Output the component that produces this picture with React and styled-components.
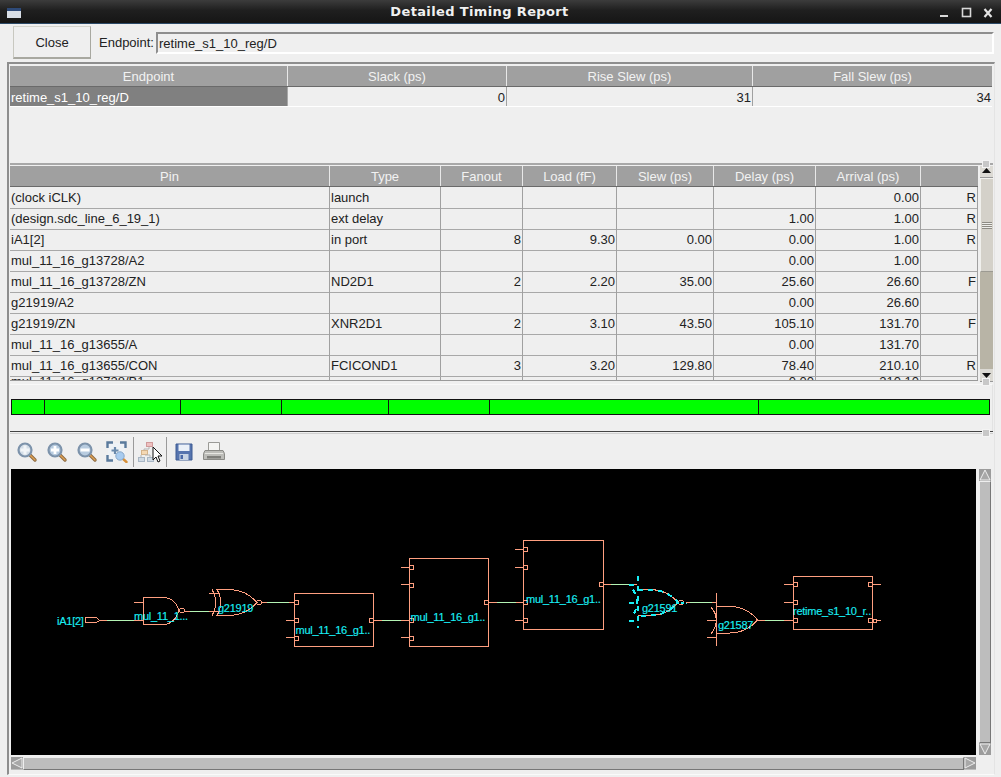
import React from 'react'
import styled, { createGlobalStyle } from 'styled-components'

const GlobalStyle = createGlobalStyle`
    html, body { margin: 0; padding: 0; background: #efefef; }
    body { width: 1001px; height: 777px; overflow: hidden; font-family: "Liberation Sans", Arial, sans-serif; font-size: 13px; color: #222; }
`

const endpointCols = [278, 219, 246, 239]
const pathCols = [320, 111, 82, 94, 97, 102, 105, 57]

const pathRows = [
    ['(clock iCLK)', 'launch', '', '', '', '', '0.00', 'R'],
    ['(design.sdc_line_6_19_1)', 'ext delay', '', '', '', '1.00', '1.00', 'R'],
    ['iA1[2]', 'in port', '8', '9.30', '0.00', '0.00', '1.00', 'R'],
    ['mul_11_16_g13728/A2', '', '', '', '', '0.00', '1.00', ''],
    ['mul_11_16_g13728/ZN', 'ND2D1', '2', '2.20', '35.00', '25.60', '26.60', 'F'],
    ['g21919/A2', '', '', '', '', '0.00', '26.60', ''],
    ['g21919/ZN', 'XNR2D1', '2', '3.10', '43.50', '105.10', '131.70', 'F'],
    ['mul_11_16_g13655/A', '', '', '', '', '0.00', '131.70', ''],
    ['mul_11_16_g13655/CON', 'FCICOND1', '3', '3.20', '129.80', '78.40', '210.10', 'R'],
]
const clippedRow = ['mul_11_16_g13728/B1', '', '', '', '', '0.00', '210.10', '']

const headers = ['Pin', 'Type', 'Fanout', 'Load (fF)', 'Slew (ps)', 'Delay (ps)', 'Arrival (ps)', '']
const segments = [33, 136, 101, 107, 101, 269, 232]

// icons for the toolbar
function Magnifier({ mark }) {
    return (
        <svg width="22" height="22" viewBox="0 0 22 22">
            <path d="M13 13l6 6" stroke="#8a6a44" strokeWidth="3.400" strokeLinecap="round" />
            <path d="M14 14l5 5" stroke="#e0a050" strokeWidth="1.400" strokeLinecap="round" />
            <circle cx="9" cy="9" r="6.500" fill={mark === 'fit' ? '#d4dee8' : '#b8cce0'} stroke="#7d93ab" strokeWidth="2.200" />
            {mark === 'fit' && <path d="M4.500 9h9M9 4.500v9" stroke="#f2f5f8" strokeWidth="3" />}
            {mark === 'plus' && <path d="M5 9h8M9 5v8" stroke="#ffffff" strokeWidth="2.800" />}
            {mark === 'minus' && <path d="M4.500 9h9" stroke="#ffffff" strokeWidth="3" />}
        </svg>
    )
}

function ZoomSelect() {
    return (
        <svg width="22" height="22" viewBox="0 0 22 22">
            <rect x="2" y="2" width="17" height="17" fill="#eef2f6" />
            <path d="M1.500 7V1.500H7M14 1.500h5.500V7M1.500 14v5.500H7" fill="none" stroke="#5a7a9c" strokeWidth="2.400" />
            <path d="M5.500 9.500h7M9 6v7" stroke="#6a8aac" strokeWidth="2.200" />
            <path d="M16 17l4.500 4" stroke="#d89038" strokeWidth="2.400" strokeLinecap="round" />
            <circle cx="14" cy="15" r="4.200" fill="#a8ccf0" stroke="#8aa8c8" />
        </svg>
    )
}

function HierarchyPointer() {
    return (
        <svg width="26" height="24" viewBox="0 0 26 24">
            <rect x="9.500" y="2.500" width="6" height="4" fill="#eec0c0" stroke="#d09a9a" />
            <rect x="4.500" y="10.500" width="6" height="4" fill="#f4d8b4" stroke="#d4b48c" />
            <rect x="1.500" y="17.500" width="6" height="4" fill="#d0dae4" stroke="#a8b6c4" />
            <rect x="10.500" y="17.500" width="6" height="4" fill="#d0dae4" stroke="#a8b6c4" />
            <path d="M12 7v2H7v1M4 15v2M8 15h5v2" fill="none" stroke="#b4b4b4" />
            <path d="M16 7v13l3-3 2 5 2-1-2-5h4z" fill="#fff" stroke="#111" strokeWidth="1" />
        </svg>
    )
}

function Floppy() {
    return (
        <svg width="18" height="18" viewBox="0 0 18 18">
            <path d="M1 1h16v16H1z" fill="#5674ae" stroke="#3c5a92" />
            <rect x="3.500" y="1.500" width="11" height="6.500" fill="#eaf0f8" />
            <rect x="4.500" y="11" width="9" height="6" fill="#c8d4e4" />
            <rect x="5.500" y="12" width="2.500" height="4" fill="#4a69a8" />
        </svg>
    )
}

function Printer() {
    return (
        <svg width="22" height="22" viewBox="0 0 22 22">
            <path d="M5.500 1.500h11v8h-11z" fill="#f4f4f2" stroke="#9a9a96" />
            <path d="M2 9.500h18l1.500 3v6h-21v-6z" fill="#bcbcb8" stroke="#8a8a86" />
            <path d="M2 12.500h18" stroke="#e6e6e2" />
            <rect x="4" y="15" width="14" height="2.500" fill="#7e7e7a" />
        </svg>
    )
}

// schematic drawn in page coordinates, viewBox matches the black area
const WIRE = '#ff9f80'
const NET = '#b4f4b4'
const CYAN = '#19eef4'

function Wire({ x1, x2, y, mid = 8 }) {
    return (
        <g>
            <line x1={x1} x2={x2} y1={y} y2={y} stroke={WIRE} />
            <line x1={x1 + mid} x2={x2 - mid} y1={y} y2={y} stroke={NET} />
        </g>
    )
}

function Stub({ x, y, len = 9 }) {
    return <line x1={x} x2={x + len} y1={y} y2={y} stroke={WIRE} />
}

function Pin({ x, y }) {
    return <rect x={x} y={Math.floor(y) - 1.5} width="4" height="4" fill="none" stroke={WIRE} />
}

function Block({ x, w = 79, top, bottom, inputs, stubs, output, label, labelX, labelY }) {
    return (
        <g>
            <rect x={x} y={top} width={w} height={bottom - top} fill="none" stroke={WIRE} />
            {inputs.map((y) => <Pin key={y} x={x} y={y} />)}
            {stubs.map((y) => <Stub key={y} x={x - 9} y={y} />)}
            <Pin x={x + w - 4} y={output} />
            <CellLabel x={labelX} y={labelY}>{label}</CellLabel>
        </g>
    )
}

function Schematic() {
    return (
        <svg width="965" height="286" viewBox="11 469 965 286" shapeRendering="crispEdges" style={{ display: 'block' }}>
            <CellLabel x={57} y={625}>iA1[2]</CellLabel>
            <path d="M85.500 617.500h11l3 3-3 2h-11z" fill="none" stroke={WIRE} />
            <Wire x1={99} x2={143} y={620.5} />

            {/* nand */}
            <g fill="none" stroke={WIRE}>
                <path d="M143.500 597.500h20c8 0 14 6 15 13-1 7-7 14-15 14h-20z" />
                <circle cx="182" cy="610.500" r="2.500" />
            </g>
            <Stub x={134} y={602.5} />
            <Stub x={134} y={620.5} />
            <Wire x1={185} x2={214} y={611.5} mid={5} />
            <CellLabel x={134} y={620}>mul_11_1...</CellLabel>

            {/* xnor */}
            <g fill="none" stroke={WIRE}>
                <path d="M217 589.500h12c12 0 22 6 28 13-6 7-16 13-28 13h-12c5-8 5-18 0-26z" />
                <path d="M212 589.500c5 8 5 18 0 26" />
                <circle cx="259" cy="602.500" r="2.500" />
            </g>
            <Stub x={209} y={593.5} />
            <Stub x={209} y={611.5} />
            <CellLabel x={218} y={612}>g21919</CellLabel>
            <Wire x1={262} x2={294} y={602.5} mid={5} />

            <Block x={294.5} top={593.5} bottom={646.5} inputs={[602, 620, 638]} stubs={[620.5, 637.5]} output={620} label="mul_11_16_g1.." labelX={295.5} labelY={634} />
            <Wire x1={374} x2={409} y={620.5} />

            <Block x={409.5} top={558.5} bottom={646.5} inputs={[567, 585, 620, 638]} stubs={[567.5, 584.5, 637.5]} output={602} label="mul_11_16_g1.." labelX={410.5} labelY={621} />
            <Wire x1={489} x2={524} y={602.5} />

            <Block x={523.5} w={80} top={540.5} bottom={629.5} inputs={[549, 567, 602, 620]} stubs={[549.5, 567.5, 620.5]} output={584} label="mul_11_16_g1.." labelX={526} labelY={603} />
            <Wire x1={603} x2={637} y={584.5} />

            {/* highlighted xor */}
            <g fill="none" stroke={WIRE}>
                <path d="M638 589.500h12c12 0 22 6 28 13-6 7-16 13-28 13h-12" />
                <circle cx="681" cy="602.500" r="2.500" />
            </g>
            <g fill="none" stroke={CYAN} strokeWidth="2" strokeDasharray="5 5">
                <path d="M638 576v52" />
                <path d="M638 589.500h12c12 0 22 6 28 13-6 7-16 13-28 13h-12" />
                <path d="M633 589.500c5 8 5 18 0 26M629 584.500h9M629 602.500h9M629 620.500h9" />
                <path d="M676 602.500h11" strokeDasharray="3 2" />
            </g>
            <CellLabel x={642} y={612}>g21591</CellLabel>
            <Wire x1={686} x2={716} y={602.5} mid={4} />

            {/* xor */}
            <g fill="none" stroke={WIRE}>
                <path d="M716.500 593v53" />
                <path d="M716.500 606.500h13c12 0 22 6 28 13.500-6 7-16 13-28 13h-13" />
                <path d="M711 607c7 8 7 18 0 27" />
            </g>
            <Stub x={707} y={620.5} />
            <Stub x={707} y={637.5} />
            <CellLabel x={718} y={629}>g21587</CellLabel>
            <Wire x1={757} x2={793} y={620.5} />

            <rect x="793.500" y="576.500" width="79" height="53" fill="none" stroke={WIRE} />
            {[584, 602, 620].map((y) => <Pin key={y} x={793.5} y={y} />)}
            {[584.5, 602.5, 620.5].map((y) => <Stub key={y} x={784} y={y} />)}
            <Pin x={868.5} y={584} />
            <Pin x={868.5} y={620} />
            <rect x="873.500" y="619.500" width="3" height="3" fill="none" stroke={WIRE} />
            <Stub x={873} y={584.5} len={8} />
            <Stub x={877} y={620.5} len={4} />
            <CellLabel x={793} y={615}>retime_s1_10_r..</CellLabel>
        </svg>
    )
}

function App() {
    return (
        <>
            <GlobalStyle />
            <TitleBar>
                <WindowMenu />
                <Title>Detailed Timing Report</Title>
                <WindowControls>
                    <svg width="60" height="14" viewBox="0 0 60 14">
                        <path d="M0 11h8" stroke="#d8d8d8" strokeWidth="2" />
                        <rect x="22.500" y="3.500" width="8" height="8" fill="none" stroke="#d8d8d8" strokeWidth="1.600" />
                        <path d="M44.500 4l7 8M51.500 4l-7 8" stroke="#e4e4e4" strokeWidth="2.200" />
                    </svg>
                </WindowControls>
            </TitleBar>

            <TopRow>
                <CloseButton>Close</CloseButton>
                <FieldLabel>Endpoint:</FieldLabel>
                <Field>retime_s1_10_reg/D</Field>
            </TopRow>

            <Panel>
                <EndpointSection>
                    <HeaderRow>
                        {['Endpoint', 'Slack (ps)', 'Rise Slew (ps)', 'Fall Slew (ps)'].map((h, i) => (
                            <HeaderCell key={h} $width={endpointCols[i]}>{h}</HeaderCell>
                        ))}
                    </HeaderRow>
                    <EndpointRow>
                        <SelectedCell $width={endpointCols[0]}>retime_s1_10_reg/D</SelectedCell>
                        <Cell $width={endpointCols[1]} $right>0</Cell>
                        <Cell $width={endpointCols[2]} $right>31</Cell>
                        <Cell $width={endpointCols[3]} $right $last>34</Cell>
                    </EndpointRow>
                </EndpointSection>

                <PathSection>
                    <PathTable>
                        <HeaderRow>
                            {headers.map((h, i) => (
                                <HeaderCell key={i} $width={pathCols[i]}>{h}</HeaderCell>
                            ))}
                        </HeaderRow>
                        {pathRows.map((row, r) => (
                            <PathRow key={r}>
                                {row.map((value, c) => (
                                    <Cell key={c} $width={pathCols[c]} $right={c > 1}>{value}</Cell>
                                ))}
                            </PathRow>
                        ))}
                        <ClippedRow>
                            {clippedRow.map((value, c) => (
                                <Cell key={c} $width={pathCols[c]} $right={c > 1}>{value}</Cell>
                            ))}
                        </ClippedRow>
                    </PathTable>
                    <TableScroll>
                        <ArrowBtn>
                            <svg width="11" height="6" viewBox="0 0 11 6"><path d="M5.500 0L10 5H1z" fill="#111" /></svg>
                        </ArrowBtn>
                        <ScrollThumb><Grip /></ScrollThumb>
                        <ScrollTrough />
                        <ArrowBtn $down>
                            <svg width="11" height="6" viewBox="0 0 11 6"><path d="M5.500 5L10 0H1z" fill="#111" /></svg>
                        </ArrowBtn>
                    </TableScroll>
                    <Handle $top={-5} />
                    <Handle $top={213} />
                </PathSection>

                <BarSection>
                    <GreenBar>
                        {segments.map((w, i) => <Segment key={i} $width={w} />)}
                    </GreenBar>
                </BarSection>

                <Splitter><Handle $top={-3} /></Splitter>

                <Toolbar>
                    <ToolBtn><Magnifier mark="fit" /></ToolBtn>
                    <ToolBtn><Magnifier mark="plus" /></ToolBtn>
                    <ToolBtn><Magnifier mark="minus" /></ToolBtn>
                    <ToolBtn><ZoomSelect /></ToolBtn>
                    <ToolSep />
                    <ToolBtn $width={31}><HierarchyPointer /></ToolBtn>
                    <ToolSep />
                    <ToolBtn $width={34}><Floppy /></ToolBtn>
                    <ToolBtn $width={26}><Printer /></ToolBtn>
                </Toolbar>

                <CanvasGrid>
                    <Canvas><Schematic /></Canvas>
                    <VScroll>
                        <BevelArrow>
                            <svg width="12" height="12" viewBox="0 0 12 12"><path d="M6 1l5 10H1z" fill="#a8a8a8" stroke="#eee" /></svg>
                        </BevelArrow>
                        <ScrollFill />
                        <BevelArrow>
                            <svg width="12" height="12" viewBox="0 0 12 12"><path d="M6 11L1 1h10z" fill="#a8a8a8" stroke="#eee" /></svg>
                        </BevelArrow>
                    </VScroll>
                    <HScroll>
                        <BevelArrow>
                            <svg width="12" height="12" viewBox="0 0 12 12"><path d="M1 6l10-5v10z" fill="#a8a8a8" stroke="#eee" /></svg>
                        </BevelArrow>
                        <ScrollFill />
                        <BevelArrow>
                            <svg width="12" height="12" viewBox="0 0 12 12"><path d="M11 6L1 1v10z" fill="#a8a8a8" stroke="#eee" /></svg>
                        </BevelArrow>
                    </HScroll>
                </CanvasGrid>
            </Panel>
        </>
    )
}

export default App

const TitleBar = styled.div`
    height: 24px;
    display: flex;
    align-items: center;
    position: relative;
    background: linear-gradient(#3c3c3c, #1f1f1f 45%, #151515);
    border-bottom: 1px solid #2c4a68;
    box-sizing: border-box;
`

const WindowMenu = styled.div`
    width: 14px;
    height: 10px;
    margin-left: 7px;
    margin-top: 3px;
    background: #d8dee6;
    border-top: 3px solid #2e4a78;
    box-sizing: border-box;
`

const Title = styled.div`
    flex: 1;
    padding-right: 63px;
    text-align: center;
    font: bold 13px "DejaVu Sans", sans-serif;
    letter-spacing: 0.37px;
    color: #f0f0f0;
`

const WindowControls = styled.div`
    position: absolute;
    right: 1px;
    top: 5px;
    height: 14px;
`

const TopRow = styled.div`
    display: flex;
    align-items: center;
    height: 38px;
    padding: 0 7px 1px 13px;
    box-sizing: border-box;
`

const CloseButton = styled.div`
    width: 78px;
    height: 33px;
    box-sizing: border-box;
    display: flex;
    align-items: center;
    justify-content: center;
    background: #efefef;
    border: 1px solid #a8a8a0;
    border-bottom: 2px solid #a8a8a0;
    border-top-color: #d4d4cc;
    border-left-color: #c8c8c0;
`

const FieldLabel = styled.div`
    margin-left: 8px;
    width: 57px;
`

const Field = styled.div`
    flex: 1;
    height: 22px;
    box-sizing: border-box;
    padding: 2px 0 0 1px;
    border-top: 2px solid #8e8e8e;
    border-left: 2px solid #8e8e8e;
    border-right: 2px solid #fff;
    border-bottom: 2px solid #fff;
`

const Panel = styled.div`
    margin: 0 6px 0 7px;
    height: 713px;
    box-sizing: border-box;
    padding: 2px 1px 0 1px;
    border-top: 2px solid #8e8e8e;
    border-left: 2px solid #8e8e8e;
    border-right: 1px solid #e4e4e4;
    border-bottom: 1px solid #fafafa;
    display: flex;
    flex-direction: column;
`

const EndpointSection = styled.div`
    height: 97px;
    width: 982px;
`

const HeaderRow = styled.div`
    display: flex;
    height: 21px;
    background: #a0a0a0;
    border-bottom: 1px solid #6a6a6a;
    box-sizing: border-box;
`

const HeaderCell = styled.div`
    width: ${(p) => p.$width}px;
    box-sizing: border-box;
    flex: none;
    text-align: center;
    color: #f2f2f2;
    line-height: 21px;
    border-right: 1px solid #e8e8e8;
    &:last-child { border-right: none; }
`

const EndpointRow = styled.div`
    display: flex;
    height: 20px;
    border-bottom: 1px solid #fff;
    box-sizing: border-box;
`

const Cell = styled.div`
    width: ${(p) => p.$width}px;
    flex: none;
    box-sizing: border-box;
    line-height: 21px;
    padding: 0 1px;
    white-space: nowrap;
    overflow: hidden;
    text-align: ${(p) => (p.$right ? 'right' : 'left')};
    border-right: 1px solid #a0a0a0;
    ${(p) => p.$last && 'border-right: none;'}
`

const SelectedCell = styled(Cell)`
    background: #808080;
    color: #fff;
    border-right-color: #a8a8a8;
`

const PathSection = styled.div`
    position: relative;
    height: 219px;
    display: flex;
    align-items: stretch;
    border-top: 2px solid #a8a8a8;
    padding-top: 1px;
    box-sizing: border-box;
`

const PathTable = styled.div`
    width: 968px;
    overflow: hidden;
    height: 215px;
    box-sizing: border-box;
    border-bottom: 1px solid #999;
`

const PathRow = styled.div`
    display: flex;
    height: 21px;
    box-sizing: border-box;
    box-shadow: 0 1px 0 #a8a8a8;
`

const ClippedRow = styled.div`
    display: flex;
    height: 4px;
    margin-top: 1px;
    & > * { line-height: 10px; height: 10px; }
`

const TableScroll = styled.div`
    width: 13px;
    margin-left: 2px;
    display: flex;
    flex-direction: column;
    background: #b8b4a6;
`

const ArrowBtn = styled.div`
    height: ${(p) => (p.$down ? 13 : 12)}px;
    box-sizing: border-box;
    display: flex;
    justify-content: center;
    padding-top: ${(p) => (p.$down ? 4 : 2)}px;
    background: #dcdad4;
    border-bottom: 1px solid #999;
`

const ScrollThumb = styled.div`
    height: 94px;
    box-sizing: border-box;
    display: flex;
    align-items: center;
    justify-content: center;
    background: #d4d1c9;
    border-top: 1px solid #f0f0ec;
    border-left: 1px solid #f0f0ec;
    border-bottom: 1px solid #9c9a92;
`

const Grip = styled.div`
    width: 10px;
    height: 7px;
    background: repeating-linear-gradient(#8e8c84 0 1px, #eeeeea 1px 2px);
`

const ScrollTrough = styled.div`
    flex: 1;
`

const Handle = styled.div`
    position: absolute;
    right: 3px;
    top: ${(p) => p.$top}px;
    width: 8px;
    height: 8px;
    box-sizing: border-box;
    background: #c8c8c8;
    border: 1px solid #f4f4f4;
`

const BarSection = styled.div`
    height: 47px;
    margin-top: 2px;
    box-sizing: border-box;
    padding: 14px 2px 0 1px;
    border-top: 1px solid #f8f8f8;
    border-right: 1px solid #e2e2e2;
`

const GreenBar = styled.div`
    display: flex;
    height: 16px;
    box-sizing: border-box;
    background: #00ff00;
    border: 1px solid #111;
`

const Segment = styled.div`
    flex: none;
    width: ${(p) => p.$width}px;
    box-sizing: border-box;
    border-right: 1px solid #111;
    &:last-child { border-right: none; flex: 1; }
`

const Splitter = styled.div`
    position: relative;
    height: 3px;
    box-sizing: border-box;
    border-top: 1px solid #444;
    border-bottom: 1px solid #d0d0d0;
`

const Toolbar = styled.div`
    display: flex;
    align-items: center;
    height: 35px;
    padding-left: 2px;
    box-sizing: border-box;
`

const ToolBtn = styled.div`
    width: ${(p) => p.$width || 30}px;
    height: 28px;
    display: flex;
    align-items: center;
    justify-content: center;
`

const ToolSep = styled.div`
    width: 1px;
    height: 30px;
    margin-left: 1px;
    background: #9a9a9a;
`

const CanvasGrid = styled.div`
    display: grid;
    grid-template-columns: 965px 12px;
    grid-template-rows: 286px 16px;
    padding-left: 1px;
    column-gap: 3px;
`

const Canvas = styled.div`
    background: #000;
    overflow: hidden;
`

const VScroll = styled.div`
    display: flex;
    flex-direction: column;
    background: #bdbdbd;
`

const HScroll = styled.div`
    display: flex;
    height: 13px;
    margin-top: 2px;
    background: #bdbdbd;
`

const BevelArrow = styled.div`
    width: 12px;
    height: 12px;
    flex: none;
    background: #9c9c9c;
    display: flex;
    align-items: center;
    justify-content: center;
`

const ScrollFill = styled.div`
    flex: 1;
    background: #bdbdbd;
    border-bottom: 1px solid #777;
    border-right: 1px solid #777;
    border-left: 1px solid #eee;
    border-top: 1px solid #eee;
`

const CellLabel = styled.text`
    font-family: "Liberation Sans", sans-serif;
    font-size: 11px;
    letter-spacing: -0.25px;
    fill: #19eef4;
    stroke: #19eef4;
    stroke-width: 0.15px;
`
